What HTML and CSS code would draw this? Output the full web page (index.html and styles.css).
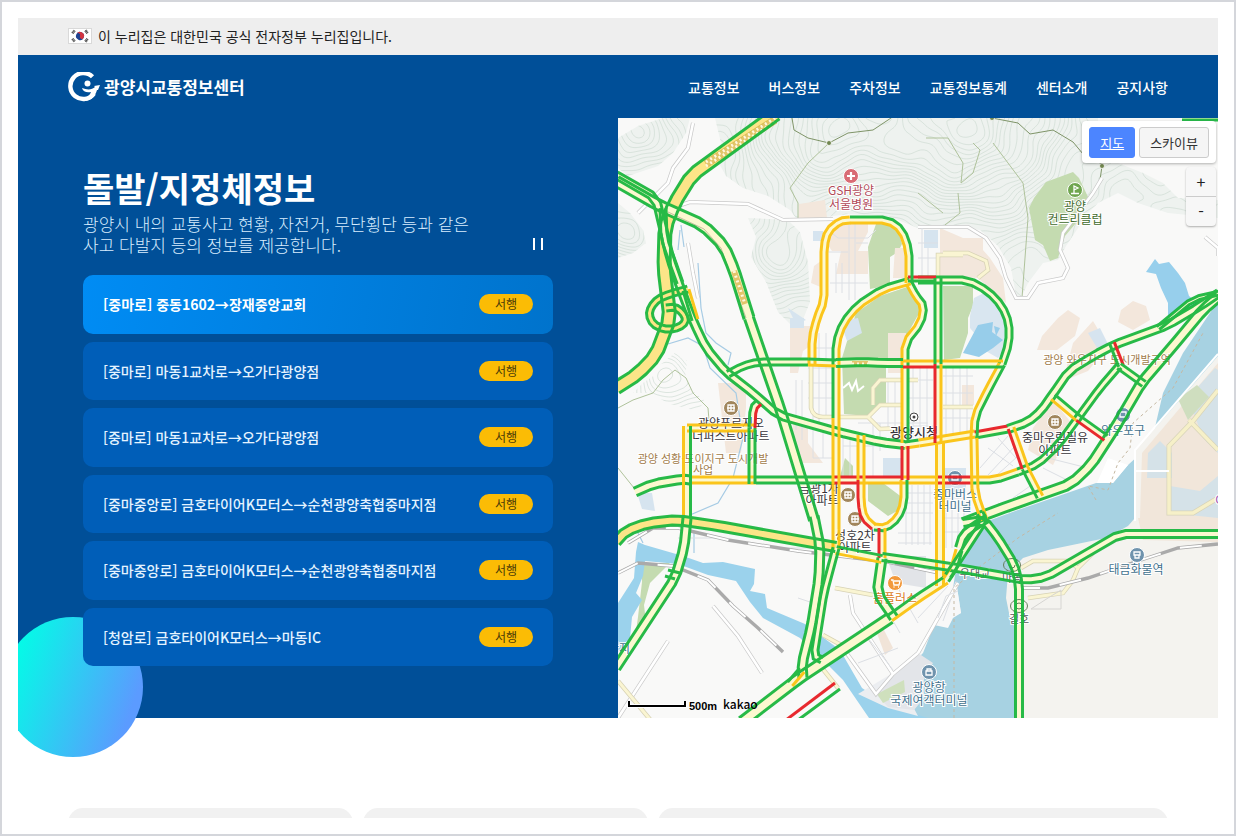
FILE: index.html
```html
<!DOCTYPE html>
<html lang="ko">
<head>
<meta charset="utf-8">
<meta name="viewport" content="width=device-width, initial-scale=1">
<title>광양시교통정보센터</title>
<link rel="stylesheet" href="styles.css">
</head>
<body>
<div class="page">
  <div class="gov-bar">
    <svg class="flag" viewBox="0 0 24 16" aria-hidden="true">
      <rect x=".5" y=".5" width="23" height="15" fill="#fff" stroke="#d9d9d9"/>
      <g transform="rotate(24 12 8)">
        <circle cx="12" cy="8" r="4" fill="#1f4391"/>
        <path d="M8 8a4 4 0 0 1 8 0a2 2 0 0 1-4 0a2 2 0 0 0-4 0z" fill="#d23440"/>
      </g>
      <g stroke="#333" stroke-width="2.6" stroke-dasharray=".9 .4">
        <path d="M4.4 5.2 6.6 2.4M17.4 2.4l2.2 2.8M4.4 10.8l2.2 2.8M17.4 13.6l2.2-2.8"/>
      </g>
    </svg>
    <span>이 누리집은 대한민국 공식 전자정부 누리집입니다.</span>
  </div>

  <header class="header">
    <a class="logo" href="#">
      <svg class="logo-mark" viewBox="0 0 32 30" aria-hidden="true">
        <path d="M24.500 4.800A13 13 0 1 0 26 21.500" fill="none" stroke="#fff" stroke-width="4.400"/>
        <path d="M14 16c5 2 10 2 13-1l-1-1 6-1-2 5-1 0c-2 7-6 10-11 11l-1-3c3-1 5-3 6-6-4 1-8 0-9-4z" fill="#fff"/>
        <circle cx="19.500" cy="11.500" r="3" fill="#fff"/>
      </svg>
      <span>광양시교통정보센터</span>
    </a>
    <nav class="nav">
      <a href="#">교통정보</a>
      <a href="#">버스정보</a>
      <a href="#">주차정보</a>
      <a href="#">교통정보통계</a>
      <a href="#">센터소개</a>
      <a href="#">공지사항</a>
    </nav>
  </header>

  <main>
    <div class="hero">
      <section class="incidents">
        <div class="intro">
          <div>
            <h1>돌발/지정체정보</h1>
            <p>광양시 내의 교통사고 현황, 자전거, 무단횡단 등과 같은<br>사고 다발지 등의 정보를 제공합니다.</p>
          </div>
          <button class="pause" type="button" aria-label="일시정지"></button>
        </div>
        <ul class="list">
          <li class="item active"><a href="#">[중마로] 중동1602→장재중앙교회</a><span class="badge">서행</span></li>
          <li class="item"><a href="#">[중마로] 마동1교차로→오가다광양점</a><span class="badge">서행</span></li>
          <li class="item"><a href="#">[중마로] 마동1교차로→오가다광양점</a><span class="badge">서행</span></li>
          <li class="item"><a href="#">[중마중앙로] 금호타이어K모터스→순천광양축협중마지점</a><span class="badge">서행</span></li>
          <li class="item"><a href="#">[중마중앙로] 금호타이어K모터스→순천광양축협중마지점</a><span class="badge">서행</span></li>
          <li class="item"><a href="#">[청암로] 금호타이어K모터스→마동IC</a><span class="badge">서행</span></li>
        </ul>
      </section>

      <section class="map" aria-label="교통 지도">
        <svg class="map-canvas" viewBox="0 0 600 600" preserveAspectRatio="xMidYMid slice">
          <defs>
            <clipPath id="hills">
              <path d="M97 0 103 25 98 40 108 58 125 70 150 78 172 92 180 103 230 96 270 98 300 110 330 108 362 112 380 128 393 150 398 178 402 182 410 165 425 145 440 142 448 128 470 95 480 85 500 75 520 85 550 95 600 100V82L560 80 545 65 525 55 500 45 480 45V0z"/>
              <path d="M0 20 20 8 45 0H72L68 15 55 35 40 48 10 58 0 50zM0 85 12 95 25 112 28 125 15 135 0 140zM130 100l40 2 12 12 8 30 2 40-12 30-20-20-12-30-15-25 5-20zM15 275l10-10 12-8 5-10 15-12 12 8-2 18 8 12 12 10-8 10-30-8-15-10z"/>
            </clipPath>
          </defs>
          <rect width="600" height="600" fill="#f9f9f8"/>
          <g fill="#eef2ef">
            <path d="M97 0 103 25 98 40 108 58 125 70 150 78 172 92 180 103 230 96 270 98 300 110 330 108 362 112 380 128 393 150 398 178 402 182 410 165 425 145 440 142 448 128 470 95 480 85 500 75 520 85 550 95 600 100V82L560 80 545 65 525 55 500 45 480 45V0z"/>
            <path d="M0 20 20 8 45 0H72L68 15 55 35 40 48 10 58 0 50zM0 85 12 95 25 112 28 125 15 135 0 140zM130 100l40 2 12 12 8 30 2 40-12 30-20-20-12-30-15-25 5-20z"/>
          </g>
          <g id="contours" clip-path="url(#hills)" fill="none" stroke="#d0dcd4" stroke-width=".7"></g>
          <g fill="#c4dbb0">
            <path d="M428 64 455 54 461 60 470 79 462 90 458 105 447 118 440 140 432 143 425 127 417 122 411 90 416 80z"/>
            <path d="M258 106h20l6 20-4 8-8 5v28l-20 4-2-42z"/>
            <path d="M230 220 238 195 262 178 292 168 304 190 290 215 285 230 268 250V285L250 298 226 296 224 240z"/>
            <path d="M325 168h30v20l-5 12v15l-8 25-16 2zM227 340l8 8v16l-14-2zM250 365h15l20 15v10l-15 8-20-15z"/>
            <path d="M24 445h28l-20 20-6 22 2 17-13 30 5-35 4-35z"/>
          </g>
          <path d="M352 198 356 180 372 172 386 192 388 230 380 240 366 232 362 222 352 210z" fill="#d9e6f0"/>
          <g fill="#f3e7dc">
            <path d="M181 86 207 82 209 100 180 102zM205 120 220 106H250V114L240 133H214zM196 148 207 140 205 170 193 165zM223 133H250V156H218zM277 130H288V160H275zM322 110 345 120H365V132L372 140 385 160 388 185 360 160 322 158zM440 200l10-8 12 8-5 18-18 14-20 0 5-14z"/>
            <path d="M503 192 515 183 528 188 532 202 515 212 500 204zM100 265h28v25l-5 45H108zM172 208h20v20l-7 5-5 22h-8zM175 305h15v20l15 20h-20l-12-18zM455 225l20-22 15 25-20 25-25 10zM415 310l20-28 20 25-20 40-25-15zM344 267h12v20h-12zM270 215h18v40h-18z"/>
          </g>
          <g fill="#d6e4ef">
            <path d="M306 112h14v18h-14zM172 200h14v10h-14zM195 113h10v10h-10zM170 190l18 12-10 4zM222 203l18-3 4 15-15 8zM265 340h24v20h-24zM318 350h30v25h-30z"/>
            <path d="M470 215l12-5 10 20-8 8zM19 375h15l3 18-13-2z"/>
          </g>
          <path d="M360 207l15-3-1 10 11 8-10 8-14 9-16-4zM376 208l6 2-4 8z" fill="#97cdea"/>
          <path d="M528 154 537 141 541 146 551 144 560 155 567 165 571 178 584 188 570 200 550 200 550 185 543 170 538 156z" fill="#97cfec"/>

          <!-- East peninsula and sea -->
          <path d="M600 183 565 235 545 275 538 305 534 325 510 347 495 365 478 365 455 373 400 392 370 403 350 423 337 457 332 490 317 505 305 535 290 550 275 572 250 603H410L600 430z" fill="#a7d2e2"/>
          <path d="M479 365 490 340 510 347 495 365z" fill="#fff"/>
          <path d="M600 238 518 332 517 400 510 408 488 420 430 432 405 440 390 455 388 480 392 500 397 510 397 603H600z" fill="#f4f3ef"/>
          <path d="M600 245 524 335 522 400 600 410z" fill="#f1e6da"/>
          <path d="M570 280 597 250 600 252V335L585 320zM530 335l12-12 12 12v25h-25zM552 368l30 5 18-15v42l-48-5z" fill="#d5e2e8"/>
          <path d="M560 281 579 267 591 279 570 302z" fill="#cfdebf"/>
          <path d="M600 272 575 303 551 328V395H575L600 380M571 302 600 332" fill="none" stroke="#d8d4b9" stroke-width="5"/>
          <path d="M600 272 575 303 551 328V395H575L600 380M571 302 600 332" fill="none" stroke="#f6f0c8" stroke-width="3.500"/>
          <path d="M600 236 517 332V403M517 353H551" fill="none" stroke="#fff" stroke-width="2"/>

          <!-- River and harbour -->
          <path d="M18 434 20 424 27 427 65 438 85 445 105 444 137 451 136 466 132 473 147 476 149 490 187 506 222 532 244 570 268 586 310 600H251L225 562 203 540 182 520 145 500 132 484 118 463 90 457 60 446 27 443 25 458 18 475 24 482 14 499 12 520 0 534V485L16 460z" fill="#9bd2ec"/>
          <path d="M338 463 343 495 316 507 305 530 300 540 283 550 240 576 270 590 300 598 285 570 300 541z" fill="#eceef1"/>
          <path d="M300 535 315 545 306 560 306 580 296 592 270 589 258 576z" fill="#e3e5e9"/>
          <path d="M338 463 343 495 335 500 330 510 316 507 338 470z" fill="#f8f8f8"/>
          <path d="M259 576 286 562 287 574 265 585z" fill="#cfe0bd"/>
          <path d="M268 438h40v32l-30-5z" fill="#e2e4e8"/>
          <path d="M257 510 263 506 275 530 267 537z" fill="#f1e4d8"/>
          <path d="M520 400H600V424L525 422z" fill="#f1e6da"/>

          <!-- Streams, trails, rails and side streets -->
          <g fill="none" stroke="#a6cbe4" stroke-width="1.200">
            <path d="M50 226 70 220 85 228 92 250 118 275 125 320 115 360 100 385 65 400M63 107l3 22M62 112l-2 20M80 145l3 45 5 25 10 10 15 10-3 12"/>
            <path d="M20 415l5 10M76 415V435"/>
          </g>
          <g fill="none" stroke="#7f9468" stroke-width="1">
            <path d="M174 0 176 12 190 20 211 25 230 15 255 12 273 0M374 0 400 5 412 16 435 12 455 24 465 36 484 46M484 48 482 62"/>
            <path d="M0 290 15 282 35 275 45 262 57 252 68 260 75 275 90 290 92 315M0 350 12 365 20 375M308 20 330 20 345 45 343 65 355 55 362 32 355 25M375 25 390 45 405 65 410 100 404 180M340 75 342 95 327 107M300 75 325 95M211 25 190 45 172 70 180 85 180 103" stroke="#afc29b"/>
          </g>
          <g fill="none" stroke="#c9c9c9" stroke-width="4">
            <path d="M60 88 72 84 130 86 165 102 215 101M300 109H350L368 120 382 140 388 160 398 180 410 180 420 165 445 160 450 150 442 132 445 115 458 98 475 75 484 60M75 5 70 30 55 50 50 65 20 95M70 125 75 155 80 180"/>
            <path d="M95 488 120 518 144 555M50 523 0 600M232 477 235 495 275 556 258 576 225 530M300 535 275 556M600 130 587 119M600 138V130M340 465 300 535"/>
          </g>
          <g fill="none" stroke="#fff" stroke-width="2.600">
            <path d="M60 88 72 84 130 86 165 102 215 101M300 109H350L368 120 382 140 388 160 398 180 410 180 420 165 445 160 450 150 442 132 445 115 458 98 475 75 484 60M75 5 70 30 55 50 50 65 20 95M70 125 75 155 80 180"/>
            <path d="M95 488 120 518 144 555M50 523 0 600M232 477 235 495 275 556 258 576 225 530M300 535 275 556M600 130 587 119M600 138V130M340 465 300 535"/>
          </g>
          <g fill="none" stroke="#dcdfe4" stroke-width="1">
            <path d="M231 105V182M237 105V182M210 134H230M218 145V175M224 145V175M212 165H250M238 125H250M210 112l10 8h30l8-8M300 125h20M304 110v50M310 130v30M300 140h20M60 420h40M165 430h45M180 480l15 5"/>
            <path d="M195 215v95M201 215v95M208 215v82M190 230h25M190 250h25M190 265h25M190 280h25M178 262v50M184 262v60M195 310v30h20M205 310v30M225 315v45M232 315v45M225 328h60M255 305v55M262 305v28M270 262v50M277 262v55M240 305h70M295 250v70M302 250v70M309 250v70M290 262h25M290 280h25M290 308h25M328 250v68M335 250v68M342 250v68M349 250v68M325 258h30M325 275h30M325 300h30M325 290h30"/>
            <path d="M288 367v60M294 367v60M300 367v60M306 367v60M312 367v60M285 375h30M285 385h30M285 395h30M280 415h34M280 425h34M328 370v60M334 370v60M340 370v60M346 370v60M325 380h30M325 390h28M325 400h26M325 414h26M362 350l28-32M370 357l28-30M378 358l22-20M370 330l25 18M380 320l18 20M395 380l20-14M300 500l30-32M262 480l20 35M280 470l20 35M250 520l25 32M320 500l8-22 12-5M325 503l8-22M240 545l40-15M380 385l12 10M430 340l40 10M425 350l30 15"/>
          </g>
          <path d="M193 248V290Q195 299 205 299H250L262 287 285 287M250 299 262 311 285 310M300 262H262L255 270 255 287M325 135H350L368 143 370 152 360 160M320 160V137H345M325 289H355M217 470 255 477M205 517 225 528M200 545 220 570M0 563 35 605M403 450 415 443H450L460 450 455 462 445 475 410 480M460 450 475 435" fill="none" stroke="#d7d2b5" stroke-width="4.500"/>
          <path d="M193 248V290Q195 299 205 299H250L262 287 285 287M250 299 262 311 285 310M300 262H262L255 270 255 287M325 135H350L368 143 370 152 360 160M320 160V137H345M325 289H355M217 470 255 477M205 517 225 528M200 545 220 570M0 563 35 605M403 450 415 443H450L460 450 455 462 445 475 410 480M460 450 475 435" fill="none" stroke="#faf5d2" stroke-width="3"/>
          <path d="M225 270 231 265 234 272 238 263 240 273 246 268" fill="none" stroke="#fff" stroke-width="2"/>
          <path d="M0 455 20 445 55 448 90 462 115 488 140 510 165 534M10 425 35 410 60 410 110 422 180 433 270 444 335 458M400 470H430L470 460 520 443 560 430 600 426" fill="none" stroke="#aaa" stroke-width="3.400"/>
          <path d="M0 455 20 445 55 448 90 462 115 488 140 510 165 534M10 425 35 410 60 410 110 422 180 433 270 444 335 458M400 470H430L470 460 520 443 560 430 600 426" fill="none" stroke="#fff" stroke-width="2" stroke-dasharray="22 20"/>
          <path d="M336 600V470L360 450 400 420 440 395M478 382 470 368 490 372 500 345 512 330 515 305 555 270 585 215" fill="none" stroke="#c5b8a2" stroke-width="1" stroke-dasharray="3 3"/>
          <path d="M413 491 430 480 443 472V491H413" fill="none" stroke="#d6d5d2"/>

          <g id="road-base" fill="none" stroke-linejoin="round"></g>
          <path d="M88 46 157 2" fill="none" stroke="#d9bd55" stroke-width="8"/>
          <path d="M88 46 157 2M116 153 127 186M234 246H250" fill="none" stroke="#e2c56a" stroke-width="6"/>
          <path d="M88 44 157 0M88 48 157 4M116 153 127 186M234 246H250" fill="none" stroke="#fff7dc" stroke-width="3" stroke-dasharray="2 3"/>

          <g class="map-label">
            <g fill="#b14a59"><text x="233" y="77">GSH광양</text><text x="233" y="91">서울병원</text></g>
            <g fill="#3f6b2c"><text x="457" y="93">광양</text><text x="457" y="106">컨트리클럽</text></g>
            <g fill="#37343a"><text x="113" y="310">광양푸르지오</text><text x="113" y="323">더퍼스트아파트</text><text x="201" y="375">금광1차</text><text x="204" y="387">아파트</text><text x="237" y="422">성호2차</text><text x="237" y="434">아파트</text><text x="437" y="324">중마우림필유</text><text x="437" y="337">아파트</text><text class="big" x="296" y="319">광양시청</text></g>
            <g fill="#a17b4a" class="small"><text x="85" y="345">광양 성황·도이지구 도시개발</text><text x="85" y="356">사업</text><text x="489" y="246">광양 와우지구 도시개발구역</text></g>
            <g fill="#42718d"><text x="337" y="381">중마버스</text><text x="337" y="393">터미널</text><text x="505" y="317">와우포구</text><text x="518" y="456">태금화물역</text><text x="311" y="574">광양항</text><text x="311" y="587">국제여객터미널</text><text x="1" y="535">단지</text></g>
            <text x="277" y="485" fill="#db7b25">홈플러스</text>
            <g fill="#5a5a5a" class="small"><text x="357" y="460">우대교</text><text x="394" y="464">마동</text><text x="401" y="505">길호</text></g>
            <text x="601" y="386" fill="#a35bb5">C</text>
          </g>
          <g stroke="#fff">
            <circle cx="233" cy="58" r="7.500" fill="#d96b74"/><circle cx="457" cy="72" r="7.500" fill="#70a650"/>
            <circle cx="277" cy="465" r="7.500" fill="#f2993c"/>
            <g fill="#a1865c"><circle cx="113" cy="290" r="7.500"/><circle cx="437" cy="304" r="7.500"/><circle cx="230" cy="377" r="7.500"/><circle cx="237" cy="401" r="7.500"/></g>
            <g fill="#6f93ad"><circle cx="337" cy="360" r="7.500"/><circle cx="505" cy="297" r="7.500"/><circle cx="519" cy="437" r="7.500"/><circle cx="311" cy="554" r="7.500"/></g>
          </g>
          <g fill="none" stroke="#fff" stroke-width="1.300">
            <path d="M233 54v8M229 58h8" stroke-width="2.200"/>
            <path d="M456 75V68l4 2-4 2M453 75.500h8M273 462h2l1 5h5l1-4h-6M275.500 469h1M280 469h1"/>
            <path d="M110 287v6h6v-6zM113 287v6M109 290h8M434 301v6h6v-6zM437 301v6M433 304h8M227 374v6h6v-6zM230 374v6M226 377h8M234 398v6h6v-6zM237 398v6M233 401h8"/>
            <path d="M334 357h6v5h-6zM502 294h6v5h-6zM516 434h6v3h-6zM517 437v3h4v-3M308 553h6v4h-6zM309 553v-2h4v2"/>
          </g>
          <g fill="#728750" stroke="#fff" stroke-width=".8"><circle cx="211" cy="25" r="2.500"/><circle cx="374" cy="0" r="2.500"/><circle cx="484" cy="48" r="2.500"/></g>
          <circle cx="296" cy="299" r="4" fill="#fff" stroke="#444"/><circle cx="296" cy="299" r="1.500" fill="#444"/>
          <g fill="none" stroke="#667e5c"><ellipse cx="394" cy="447" rx="8.500" ry="6.500"/><ellipse cx="401" cy="488" rx="8.500" ry="6.500"/><path d="M398 488a3 3 0 1 0 6 0a3 3 0 1 0-6 0M391 447a3 3 0 1 0 6 0"/></g>

          <g id="road-flow" fill="none" stroke-linejoin="round" stroke-width="3" opacity=".93"></g>

          <path d="M11 583V588H67V583" fill="none" stroke="#fff" stroke-width="4"/>
          <path d="M11 583V588H67V583" fill="none" stroke="#000" stroke-width="2"/>
          <text class="scale" x="71" y="592">500m</text>
          <text class="kakao" x="105" y="591">kakao</text>
        </svg>
        <div class="map-types">
          <button class="type selected" type="button">지도</button>
          <button class="type" type="button">스카이뷰</button>
        </div>
        <div class="zoom">
          <button type="button" aria-label="확대">+</button>
          <button type="button" aria-label="축소">-</button>
        </div>
      </section>
    </div>

    <div class="cards">
      <section class="card"></section>
      <section class="card"></section>
      <section class="card"></section>
    </div>
  </main>
</div>
<script src="map.js"></script>
</body>
</html>
```
FILE: styles.css
```css
* { box-sizing: border-box; }

body {
  margin: 0;
  height: 100vh;
  padding: 16px;
  border: 2px solid #d4d6db;
  background: #fff;
  color: #222;
  font-family: "Noto Sans CJK KR", "Noto Sans", sans-serif;
  font-size: 14px;
}

a { color: inherit; text-decoration: none; }
button { font-family: inherit; cursor: pointer; }

.page { height: 100%; overflow: hidden; }

.gov-bar {
  display: flex;
  align-items: center;
  gap: 6px;
  height: 37px;
  padding: 0 50px 2px;
  background: #eee;
  line-height: 20px;
}
.flag { width: 24px; height: 16px; }

.header {
  display: flex;
  align-items: center;
  justify-content: space-between;
  height: 63px;
  padding: 0 50px;
  background: #004f98;
  color: #fff;
}
.logo { display: flex; align-items: center; gap: 4px; font-size: 17px; font-weight: 700; }
.logo-mark { width: 32px; height: 30px; }
.nav { display: flex; gap: 29px; font-weight: 500; }

.hero { display: grid; grid-template-columns: 1fr 1fr; min-height: 600px; }

.incidents {
  position: relative;
  display: flex;
  flex-direction: column;
  gap: 20px;
  padding: 45px 65px 52px;
  background: #004f98;
  color: #fff;
}
.incidents::before {
  content: "";
  position: absolute;
  left: -15px;
  bottom: -39px;
  width: 140px;
  height: 140px;
  border-radius: 50%;
  background: linear-gradient(110deg, #00ffe6 10%, #5b9bff 85%);
}
.intro { display: flex; justify-content: space-between; align-items: flex-end; }
.intro h1 { margin: 0; font-size: 34px; font-weight: 700; line-height: 50px; }
.intro p { margin: 0; font-size: 17px; font-weight: 300; line-height: 21px; color: #d8edff; }

.pause {
  width: 10px;
  height: 12px;
  margin: 0 10px 5px 0;
  padding: 0;
  border: solid #fff;
  border-width: 0 2px;
  background: none;
}

.list {
  position: relative;
  flex: 1;
  display: grid;
  grid-auto-rows: 1fr;
  gap: 8px;
  margin: 0;
  padding: 0;
  list-style: none;
}
.item {
  display: flex;
  align-items: center;
  justify-content: space-between;
  padding: 0 20px;
  border-radius: 10px;
  background: #005eb8;
  color: #e4f3ff;
  font-weight: 500;
}
.item.active {
  background: linear-gradient(100deg, #008cf4, #0073cc);
  color: #fff;
  font-weight: 700;
}
.badge {
  padding: 0 16px;
  border-radius: 10px;
  background: #fbbc05;
  color: #4a3a08;
  font-size: 12px;
  font-weight: 400;
  line-height: 20px;
}

.map { position: relative; overflow: hidden; background: #f9f9f8; }
.map-canvas { position: absolute; width: 100%; height: 100%; }
.map-label {
  font-size: 12px;
  text-anchor: middle;
  stroke: #fff;
  stroke-width: 2px;
  paint-order: stroke;
}
.map-label .small { font-size: 11px; }
.map-label .big { font-size: 13px; font-weight: 500; }
.scale { font: 700 11px "Liberation Sans", sans-serif; }
.kakao { font: 500 12px "Noto Sans CJK KR", sans-serif; }

.map-types {
  position: absolute;
  top: 3px;
  right: 2px;
  display: flex;
  gap: 4px;
  padding: 6px 7px 5px;
  border-radius: 4px;
  background: #fff;
  box-shadow: 0 1px 3px rgba(0, 0, 0, .3);
}
.type {
  padding: 0 10px;
  border: 1px solid #ccc;
  border-radius: 3px;
  background: #f5f5f5;
  color: #333;
  font-size: 13px;
  line-height: 29px;
}
.type.selected { border-color: #4c85ff; background: #4c85ff; color: #fff; text-decoration: underline; }

.zoom {
  position: absolute;
  top: 49px;
  right: 2px;
  width: 30px;
  border-radius: 4px;
  background: #f7f7f7;
  box-shadow: 0 1px 2px rgba(0, 0, 0, .3);
}
.zoom button {
  display: block;
  width: 100%;
  padding: 0;
  border: 0;
  background: none;
  color: #222;
  font-size: 16px;
  line-height: 29px;
}
.zoom button + button { border-top: 1px solid #ccc; }

.cards {
  display: grid;
  grid-template-columns: 285fr 285fr 510fr;
  gap: 10px;
  padding: 90px 50px 0;
}
.card { min-height: 200px; border-radius: 15px; background: #f1f1f1; }
```
FILE: map.js
```js
const NS = "http://www.w3.org/2000/svg";
const COLORS = { g: "#18b63c", y: "#fbc20d", r: "#e71a20" };

function draw(parent, d, attrs) {
  const path = document.createElementNS(NS, "path");
  path.setAttribute("d", d);
  for (const key in attrs) path.setAttribute(key, attrs[key]);
  document.getElementById(parent).appendChild(path);
}

const toPath = pts => "M" + pts.map(p => p[0].toFixed(1) + " " + p[1].toFixed(1)).join("L");

// Shift a polyline sideways; a positive distance is to the right of travel.
function offset(pts, dist) {
  return pts.map((p, i) => {
    const a = pts[Math.max(i - 1, 0)], b = pts[Math.min(i + 1, pts.length - 1)];
    const unit = (u, v) => {
      const l = Math.hypot(v[0] - u[0], v[1] - u[1]) || 1;
      return [-(v[1] - u[1]) / l, (v[0] - u[0]) / l];
    };
    const n1 = i ? unit(a, p) : unit(p, b);
    const n2 = i < pts.length - 1 ? unit(p, b) : n1;
    const k = dist / Math.max(1 + n1[0] * n2[0] + n1[1] * n2[1], 0.5);
    return [p[0] + (n1[0] + n2[0]) * k, p[1] + (n1[1] + n2[1]) * k];
  });
}

// Cut the corners of a polyline while keeping its end points.
function soften(pts) {
  const out = [pts[0]];
  for (let i = 1; i < pts.length - 1; i++) {
    const p = pts[i];
    for (const [q, t] of [[pts[i - 1], 0.25], [pts[i + 1], 0.25]]) {
      const l = Math.hypot(q[0] - p[0], q[1] - p[1]) || 1;
      const k = Math.min(t, 6 / l);
      out.push([p[0] + (q[0] - p[0]) * k, p[1] + (q[1] - p[1]) * k]);
    }
  }
  out.push(pts[pts.length - 1]);
  return out;
}

// [points, left colour, right colour, half width, surface colour]
const roads = [
  ["158,-4 74,57 56,86 47,110 46,150 52,200 38,237 20,256 -2,270", "g", "g", 6, "#fce588"],
  ["-2,63 40,87 85,107 106,128 116,152 131,200", "g", "g", 5],
  ["131,200 162,290 196,402", "g", "g", 4.5],
  ["-2,57 38,80 45,110 52,140 66,180 76,205 88,230 108,254 135,275 160,297 220,314 262,324 287,327", "g", "g", 3.5],
  ["45,90 46,120 53,140 62,165", "g", "g", 3],
  ["287,327 301,325", "g", "y", 3], ["301,325 320,322 357,316", "y", "y", 3],
  ["357,317 390,311", "r", "g", 3],
  ["390,311 410,304 423,293 435,276 451,253 475,238 496,227 550,207 582,188 601,175", "g", "g", 3.5],
  ["345,405 380,392 430,374 453,366 473,347 497,310 524,264 555,228 585,192 601,178", "g", "g", 4.5],
  ["540,210 575,181 601,175", "g", "g", 2],
  ["70,171 52,176 40,181 33,189 31,197 35,206 45,211 56,211 65,207 68,201 64,194 57,189 48,190", "g", "g", 3, "#fce588"],
  ["68,172 77,202", "y", "g", 3],
  ["17,374 35,366 65,361 72,362", "g", "g", 4],
  ["72,362 138,362", "y", "y", 3], ["138,362 216,362", "g", "g", 3], ["216,362 240,362", "r", "r", 3],
  ["240,362 285,362", "r", "y", 3], ["285,362 320,362", "y", "y", 3], ["320,362 355,362", "r", "r", 3],
  ["355,362 377,362 400,354", "y", "g", 3], ["400,354 420,346 440,327 460,300 482,270 501,248", "g", "g", 3],
  ["494,225 503,248", "r", "g", 2.5], ["501,248 526,266", "g", "g", 3],
  ["435,279 460,300", "g", "y", 3], ["460,300 488,320", "g", "r", 3],
  ["393,310 407,350", "y", "r", 3], ["407,350 422,379", "y", "g", 3],
  ["384,246 370,272 357,298 356,320", "g", "y", 3], ["356,320 357,376 366,402", "y", "y", 3],
  ["218,432 218,300", "y", "y", 3], ["218,300 218,225 225,205 240,187 265,171 292,163", "g", "y", 3],
  ["300,162 350,162 370,173 384,188 391,205 391,225 384,246", "g", "g", 3],
  ["290,161 318,161", "r", "g", 2],
  ["194,248 194,220 199,200 206,183 206,128 210,113 222,103 232,102", "y", "y", 3],
  ["232,102 270,102 284,112 291,132 291,165", "g", "y", 3],
  ["291,165 298,178 306,188 303,205 287,225 287,325", "g", "y", 3],
  ["287,328 287,362", "r", "r", 3], ["286,362 286,385 280,400 268,410 256,409", "g", "y", 3],
  ["256,409 246,400 243,385 243,362", "r", "y", 3], ["243,362 243,317", "y", "y", 3],
  ["264,410 264,440", "y", "r", 3], ["264,440 259,475 276,500", "g", "g", 4],
  ["110,256 125,248 140,244 190,244", "g", "g", 3], ["190,244 218,245", "g", "y", 3],
  ["218,245 245,244 265,245 285,245", "g", "g", 3.5], ["285,246 317,246", "y", "r", 3], ["317,246 385,246", "y", "g", 3],
  ["320,160 320,246", "g", "g", 3], ["320,246 320,325", "y", "r", 3], ["322,325 322,468", "y", "y", 3.5],
  ["69,310 137,310", "y", "y", 3], ["69,308 69,400", "g", "y", 3.5],
  ["69,400 66,430 57,460 -2,550", "g", "g", 4],
  ["134,366 134,310", "g", "g", 3], ["134,310 135,290 141,284", "g", "r", 3],
  ["-2,424 8,413 30,405 60,402 100,408 218,429", "g", "g", 4.5, "#fce588"],
  ["218,432 264,441", "g", "y", 3.5], ["264,439 300,444 345,451 408,462 428,459 502,416 601,416", "g", "g", 3.5],
  ["196,398 202,428 201,460 193,510 184,546 185,560", "g", "g", 4],
  ["218,430 206,475 196,538 204,542", "g", "g", 3],
  ["184,552 172,566", "y", "g", 3],
  ["124,604 180,561 272,500", "g", "g", 5], ["272,500 300,480 328,462", "g", "y", 3.5],
  ["328,462 336,450 341,432", "y", "g", 3], ["341,430 345,417 358,407 370,400", "g", "g", 3.5],
  ["345,405 366,402 380,420 396,446 401,465 401,603", "g", "g", 3.5],
  ["330,458 347,432 366,403 362,395", "g", "g", 3],
  ["564,-1 601,-1", "y", "g", 3]
];

roads.forEach(([text, left, right, half, surface]) => {
  const pts = soften(text.split(" ").map(p => p.split(",").map(Number)));
  draw("road-base", toPath(pts), { stroke: surface || "#fcf8d0", "stroke-width": half * 2 });
  draw("road-flow", toPath(offset(pts, -half)), { stroke: COLORS[left] });
  draw("road-flow", toPath(offset(pts, half)), { stroke: COLORS[right] });
});
draw("road-flow", "M217 565L168 602", { stroke: COLORS.r });
draw("road-flow", "M222 571L180 602M50 452L62 455M47 458L57 461", { stroke: COLORS.g });
draw("road-base", "M50 94L86 111L103 130L128 200", { stroke: "#c6bf9e", "stroke-width": 1 });

// Contour lines of a synthetic terrain, traced with marching squares.
const height = (x, y) =>
  9 * Math.exp(-((x - 200) ** 2 + (y - 20) ** 2) / 5000) +
  11 * Math.exp(-((x - 345) ** 2 + (y - 10) ** 2) / 9000) +
  7 * Math.exp(-((x - 20) ** 2 + (y - 20) ** 2) / 3000) +
  6 * Math.exp(-((x - 160) ** 2 + (y - 140) ** 2) / 3000) +
  5 * Math.exp(-((x - 50) ** 2 + (y - 265) ** 2) / 1500) +
  4 * Math.exp(-((x - 5) ** 2 + (y - 115) ** 2) / 900) +
  0.35 * Math.sin(x / 11 + y / 23) + 0.3 * Math.cos(y / 9 - x / 17) +
  0.12 * Math.sin(x / 5) * Math.cos(y / 6) - y / 60 + x / 150;

let lines = "";
const step = 3;
const interval = 0.45;
for (let y = 0; y < 300; y += step) {
  for (let x = 0; x < 600; x += step) {
    const c = [[x, y], [x + step, y], [x + step, y + step], [x, y + step]];
    const h = c.map(p => height(p[0], p[1]));
    const low = Math.min(...h), high = Math.max(...h);
    for (let level = Math.ceil(low / interval) * interval; level < high; level += interval) {
      const cuts = [];
      for (let i = 0; i < 4; i++) {
        const j = (i + 1) % 4;
        if ((h[i] < level) !== (h[j] < level)) {
          const t = (level - h[i]) / (h[j] - h[i]);
          cuts.push([c[i][0] + t * (c[j][0] - c[i][0]), c[i][1] + t * (c[j][1] - c[i][1])]);
        }
      }
      if (cuts.length > 1) lines += toPath(cuts.slice(0, 2));
    }
  }
}
draw("contours", lines, {});
```
